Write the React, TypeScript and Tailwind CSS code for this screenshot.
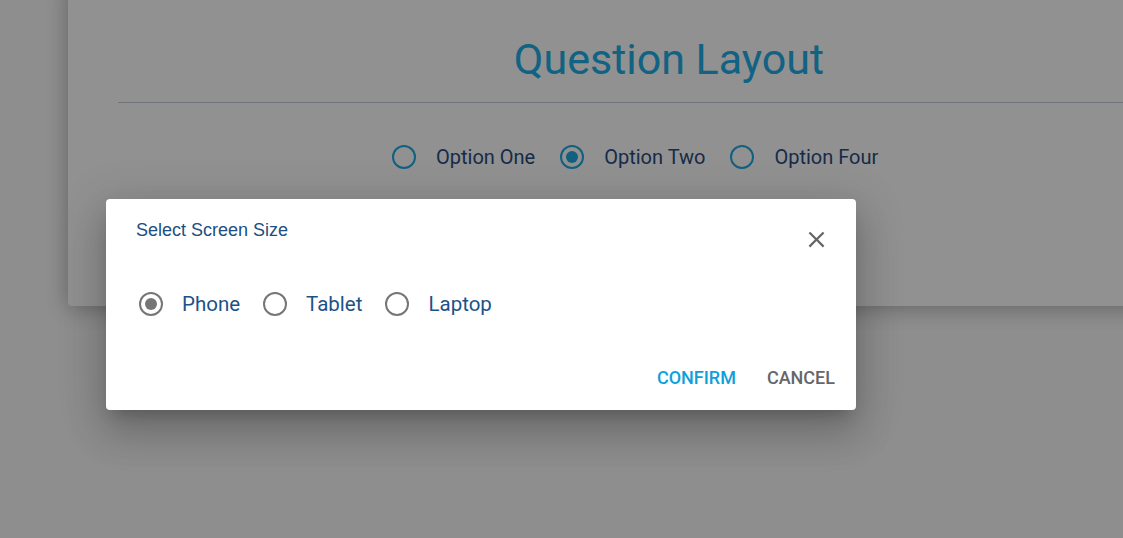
import React from 'react';

const FONT = { fontFamily: 'Roboto, "Liberation Sans", sans-serif' };

interface RadioProps {
  label: string;
  checked?: boolean;
  tone: 'blue' | 'gray';
}

// simple MUI-like radio, not interactive
function Radio({ label, checked = false, tone }: RadioProps): React.JSX.Element {
  const ring = tone === 'blue' ? 'border-[#21a9e2]' : 'border-[#767676]';
  const dot = tone === 'blue' ? 'bg-[#21a9e2]' : 'bg-[#767676]';
  const text =
    tone === 'blue'
      ? 'text-[#2a4d80] ml-[20px] text-[20px]'
      : 'text-[#1b5289] ml-[19px] text-[20.5px]';
  return (
    <label className="flex items-center">
      <span
        className={`flex h-[24px] w-[24px] items-center justify-center rounded-full border-2 ${ring}`}
      >
        {checked && <span className={`h-[12px] w-[12px] rounded-full ${dot}`}></span>}
      </span>
      <span className={`leading-none ${text}`}>{label}</span>
    </label>
  );
}

export default function App(): React.JSX.Element {
  return (
    <div className="relative h-[538px] w-[1123px] overflow-hidden bg-[#f9f9f9]" style={FONT}>
      {/* page behind the dialog */}
      <div className="ml-[68px] mt-[-20px] h-[326px] w-[1202px] rounded-[4px] bg-white px-[50px] pt-[54px] shadow-[0_2px_22px_rgba(0,0,0,0.3)]">
        <h1 className="text-center text-[43px] leading-[50px] text-[#20ace6]">Question Layout</h1>
        <div className="mt-[18px] h-px bg-[#c4ccd6]"></div>
        <div className="flex gap-[25px] pl-[274px] pt-[42px]">
          <Radio label="Option One" tone="blue" />
          <Radio label="Option Two" tone="blue" checked />
          <Radio label="Option Four" tone="blue" />
        </div>
      </div>

      {/* overlay */}
      <div className="absolute inset-0 bg-black/[0.43]"></div>

      {/* dialog */}
      <div className="absolute left-[106px] top-[199px] h-[211px] w-[750px] rounded-[4px] bg-white shadow-[0_11px_15px_-7px_rgba(0,0,0,0.2),0_24px_38px_3px_rgba(0,0,0,0.14),0_9px_46px_8px_rgba(0,0,0,0.12)]">
        <div className="flex items-start justify-between pl-[30px] pr-[26px] pt-[21px]">
          <h2
            className="text-[18px] leading-[20px] text-[#1b4f82]"
            style={{ fontFamily: '"Liberation Sans", Arial, sans-serif' }}
          >
            Select Screen Size
          </h2>
          <svg width="27" height="27" viewBox="0 0 24 24" className="mt-[6px]" fill="#666666">
            <path d="M19 6.41L17.59 5 12 10.59 6.41 5 5 6.41 10.59 12 5 17.59 6.41 19 12 13.41 17.59 19 19 17.59 13.41 12z" />
          </svg>
        </div>
        <div className="flex gap-[23px] pl-[33px] pt-[39px]">
          <Radio label="Phone" tone="gray" checked />
          <Radio label="Tablet" tone="gray" />
          <Radio label="Laptop" tone="gray" />
        </div>
        <div className="flex justify-end gap-[31px] pr-[21px] pt-[53px] text-[18px] font-medium leading-none">
          <button className="text-[#0fa0d9]">CONFIRM</button>
          <button className="text-[#666666]">CANCEL</button>
        </div>
      </div>
    </div>
  );
}
